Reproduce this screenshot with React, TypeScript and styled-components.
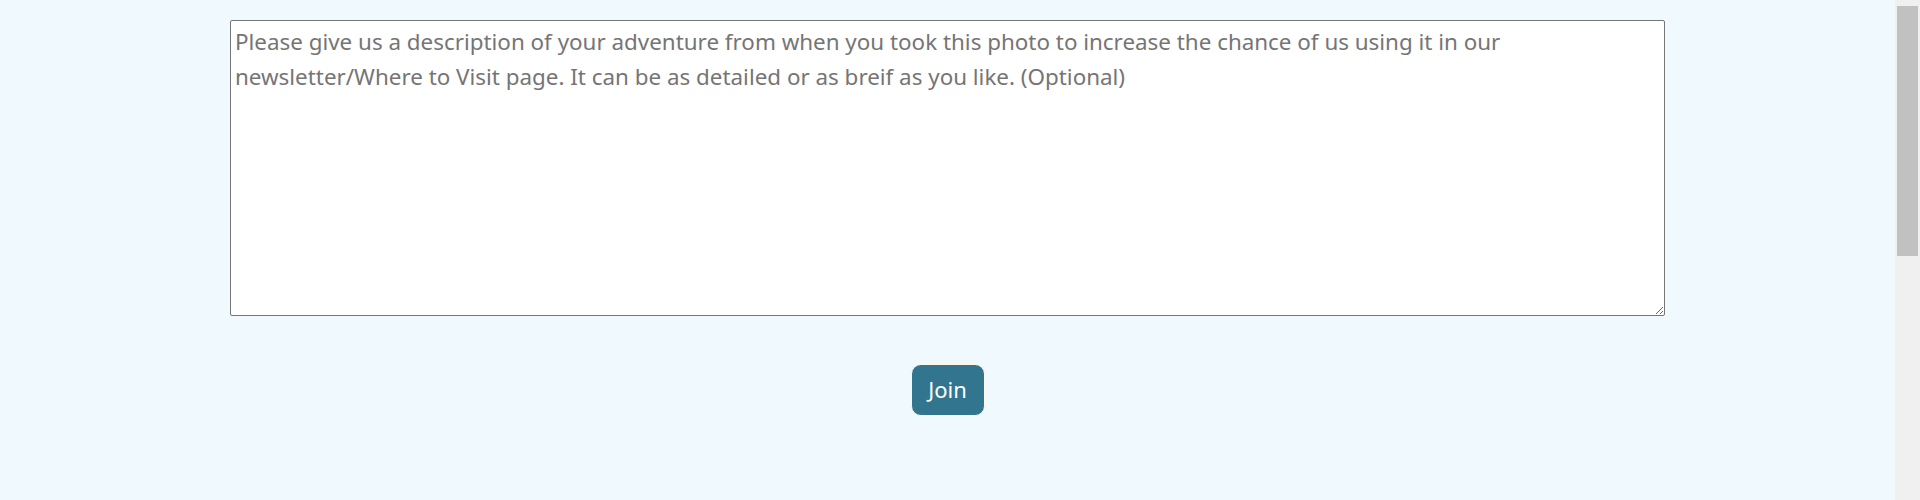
import React from "react";
import styled, { createGlobalStyle } from "styled-components";

const Global = createGlobalStyle`
  html, body { margin: 0; padding: 0; background: #f0f9fe; overflow: hidden; }
  body { font-family: "Noto Sans", "Open Sans", sans-serif; }
`;

const Shell = styled.div`
  display: flex;
  height: 500px;
`;

const Page = styled.main`
  flex: 1;
  display: flex;
  flex-direction: column;
  align-items: center;
  padding-top: 20px;
  box-sizing: border-box;
`;

const ScrollTrack = styled.div`
  width: 25px;
  background: #f0f0f0;
  padding: 6px 2px 0 2px;
  box-sizing: border-box;
`;

const ScrollThumb = styled.div`
  height: 250px;
  background: #c1c1c1;
`;

const Description = styled.textarea`
  box-sizing: border-box;
  width: 1435px;
  height: 296px;
  margin: 0;
  padding: 3px 4px;
  border: 1px solid #767676;
  border-radius: 2px;
  background: #ffffff;
  font-family: "Noto Sans", "Open Sans", sans-serif;
  font-size: 22.4px;
  line-height: 35px;
  color: #333;
  resize: both;
  &::placeholder { color: #757575; }
`;

const JoinButton = styled.button`
  margin-top: 48px;
  height: 52px;
  min-width: 74px;
  padding: 0 14px 3px;
  border: 1px solid #fff6e6;
  border-radius: 10px;
  background: #32758f;
  color: #ffffff;
  font-family: "Noto Sans", "Open Sans", sans-serif;
  font-size: 22px;
  cursor: pointer;
`;

export default function App() {
  return (
    <>
      <Global />
      <Shell>
        <Page>
          <Description placeholder={"Please give us a description of your adventure from when you took this photo to increase the chance of us using it in our\nnewsletter/Where to Visit page. It can be as detailed or as breif as you like. (Optional)"} />
          <JoinButton>Join</JoinButton>
        </Page>
        <ScrollTrack>
          <ScrollThumb />
        </ScrollTrack>
      </Shell>
    </>
  );
}
